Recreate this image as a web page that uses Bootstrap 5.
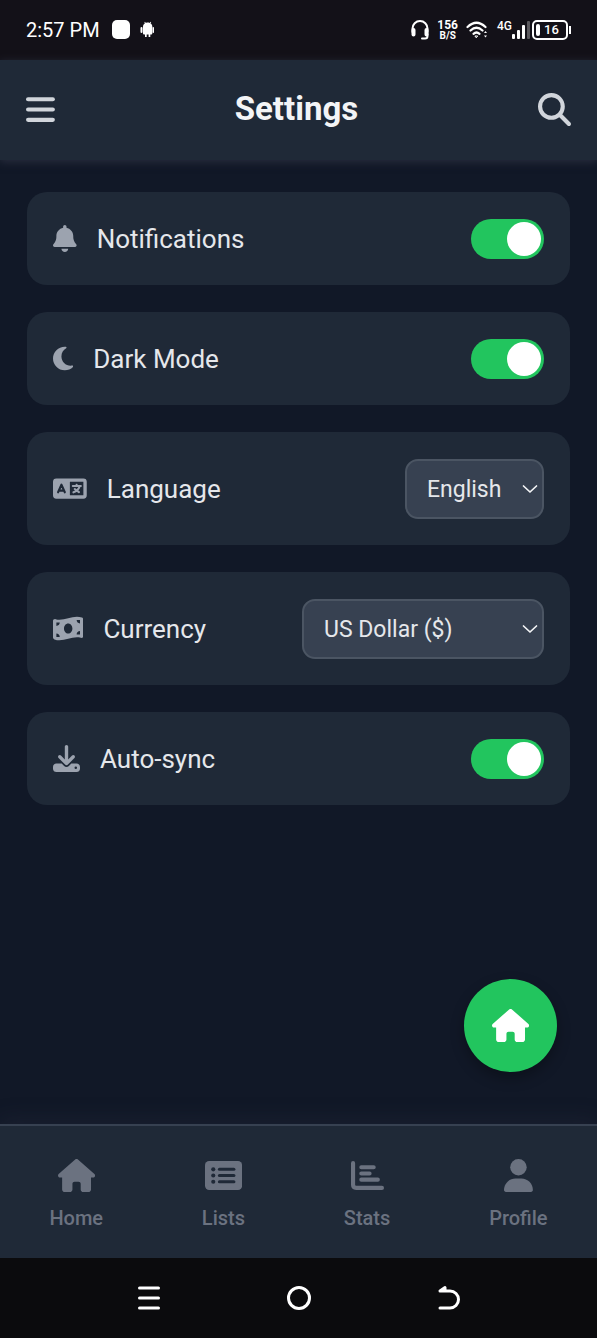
<!DOCTYPE html>
<html lang="en">
<head>
<meta charset="utf-8">
<meta name="viewport" content="width=device-width, initial-scale=1">
<title>Settings</title>
<link href="https://cdn.jsdelivr.net/npm/bootstrap@5.3.0/dist/css/bootstrap.min.css" rel="stylesheet">
<style>
  body { background: #111827; color: #e5e7eb; font-family: Roboto, "Liberation Sans", sans-serif; }
  svg { display: block; fill: currentColor; flex: none; }
  .line-art { fill: none; stroke: currentColor; stroke-linecap: round; stroke-linejoin: round; }

  .status-strip { height: 60px; padding: 0 26px; background: #131118; color: #fff; font-size: 20px; line-height: 24px; }
  .net-rate { font-size: 12px; line-height: 10px; font-weight: 700; text-align: center; }
  .net-rate span { font-size: 10px; }
  .net-kind { font-size: 12px; line-height: 12px; font-weight: 500; }
  .charge { width: 36px; height: 20px; border: 2px solid #fff; border-radius: 5px; padding: 0 2px; font-size: 13px; line-height: 16px; font-weight: 500; }
  .charge-level { width: 4px; height: 12px; border-radius: 2px; background: #fff; }
  .charge-tip { width: 2px; height: 8px; margin-left: 1px; background: #fff; }

  .app-header { height: 100px; padding: 0 26px 2px; background: #1f2937; box-shadow: 0 2px 8px rgba(46, 50, 68, .8); }
  .app-header h1 { font-size: 33px; line-height: 40px; font-weight: 700; color: #f3f4f6; }
  .bare-btn { background: none; border: 0; padding: 0; color: #d1d5db; }
  .glyph-lg { height: 33px; }
  .glyph-md { height: 27px; color: #9ca3af; }

  .settings { padding: 32px 27px; gap: 27px; }
  .setting { min-height: 93px; padding: 26px; border: 0; border-radius: 20px; background: #1f2937; color: #e5e7eb; }
  .setting-tall { min-height: 113px; }
  .setting label { gap: 20px; font-size: 26px; line-height: 40px; }
  .setting .form-check-input {
    width: 73px; height: 40px; margin: 0; border: 0; border-radius: 20px; background-color: #4b5563;
    background-image: url("data:image/svg+xml,%3Csvg xmlns='http://www.w3.org/2000/svg' viewBox='0 0 34 34'%3E%3Ccircle cx='17' cy='17' r='17' fill='%23fff'/%3E%3C/svg%3E");
    background-size: 34px 34px; background-position: left 3px center;
  }
  .setting .form-check-input:checked { background-color: #22c55e; background-position: right 3px center; }
  .setting .form-select {
    height: 60px; padding: 2px 36px 0 20px; border: 2px solid #4b5563; border-radius: 13px;
    background-color: #374151; color: #e5e7eb; font-size: 23px; line-height: 32px;
    background-image: url("data:image/svg+xml,%3Csvg xmlns='http://www.w3.org/2000/svg' viewBox='0 0 16 16' fill='none' stroke='%23f3f4f6' stroke-width='1.7' stroke-linecap='round' stroke-linejoin='round'%3E%3Cpath d='M1.500 5l6.500 6 6.500-6'/%3E%3C/svg%3E");
    background-size: 16px 16px; background-position: right 4px center;
  }
  .pick-language { width: 139px; }
  .pick-currency { width: 242px; }

  .fab { position: absolute; right: 40px; bottom: 52px; width: 93px; height: 93px; border: 0; background: #22c55e; color: #fff; box-shadow: 0 6px 14px rgba(0, 0, 0, .3); }

  .tab-strip { height: 134px; padding-top: 6px; border-top: 2px solid #374151; background: #1f2937; box-shadow: 0 -4px 20px rgba(46, 50, 68, .3); }
  .tab-strip a { gap: 12px; color: #6b7280; font-size: 20px; line-height: 28px; font-weight: 500; text-decoration: none; }

  .system-strip { height: 80px; background: #0b0b0d; }
  .system-strip button { color: #fff; width: 150px; height: 80px; }
</style>
</head>
<body>
<div class="d-flex flex-column min-vh-100">
  <div class="status-strip d-flex align-items-center justify-content-between">
    <div class="d-flex align-items-center">
      <span>2:57 PM</span>
      <svg class="ms-2" width="46" height="20" viewBox="0 0 46 20">
        <rect x="4" y="0" width="18" height="19" rx="5"/>
        <path d="M35 6.500C35.200 4.800 36 4 37 3.300L36.300 2.200 37 1.800 37.900 2.900C39 2.500 40.500 2.500 41.600 2.900L42.500 1.800 43.200 2.200 42.400 3.300C43.400 4 44.200 4.800 44.300 6.500V13.500Q44.300 14.500 43.300 14.500H42.300V17H40.600V14.500H38.700V17H37V14.500H36Q35 14.500 35 13.500z"/>
        <rect x="32.500" y="7" width="2" height="6" rx="1"/><rect x="44.500" y="7" width="1.500" height="6" rx="0.700"/>
      </svg>
    </div>
    <div class="d-flex align-items-center">
      <svg class="line-art me-2" width="18" height="20" viewBox="0 0 18 20" stroke-width="2">
        <path d="M1.500 12V8.500a7.500 7.500 0 0 1 15 0V12M16.500 14v2q0 2.500-2.500 2.500h-3"/>
        <path d="M2.500 10v4.500M15.500 10v4.500" stroke-width="4"/>
      </svg>
      <div class="net-rate me-2">156<br><span>B/S</span></div>
      <svg class="line-art me-2" width="23" height="18" viewBox="0 0 23 18" stroke-width="2.200">
        <path d="M1.500 6Q10.500-2.500 19.500 6M4.500 9.500Q10.500 4 16.500 9.500M7.500 12.800Q10.500 10.200 13.500 12.800"/>
        <path d="M9.300 15h2.400l-1.200 1.500z" stroke-width="1"/>
        <path d="M18 12l1.500-2 1.500 2zM18 14.500l1.500 2 1.500-2z" fill="currentColor" stroke="none"/>
      </svg>
      <span class="net-kind align-self-start">4G</span>
      <svg width="20" height="20" viewBox="0 0 20 20">
        <rect x="0" y="14" width="3" height="5" rx="1"/><rect x="5" y="10" width="3" height="9" rx="1"/>
        <rect x="10" y="5" width="3" height="14" rx="1"/><rect x="15" y="1" width="3" height="18" rx="1" opacity=".3"/>
      </svg>
      <div class="charge d-flex align-items-center gap-1"><span class="charge-level"></span>16</div>
      <span class="charge-tip"></span>
    </div>
  </div>

  <header class="app-header d-flex align-items-center justify-content-between">
    <button class="bare-btn" type="button" aria-label="Menu">
      <svg class="glyph-lg" viewBox="0 0 448 512"><rect y="64" width="448" height="64" rx="32"/><rect y="224" width="448" height="64" rx="32"/><rect y="384" width="448" height="64" rx="32"/></svg>
    </button>
    <h1 class="m-0">Settings</h1>
    <button class="bare-btn" type="button" aria-label="Search">
      <svg class="glyph-lg" viewBox="0 0 512 512"><path d="M416 208c0 45.900-14.900 88.300-40 122.700L502.600 457.400c12.500 12.500 12.500 32.800 0 45.300s-32.800 12.500-45.300 0L330.700 376c-34.400 25.200-76.800 40-122.700 40C93.100 416 0 322.900 0 208S93.100 0 208 0S416 93.100 416 208zM208 352a144 144 0 1 0 0-288 144 144 0 1 0 0 288z"/></svg>
    </button>
  </header>

  <main class="flex-grow-1 position-relative">
    <div class="settings d-flex flex-column">
      <div class="card setting flex-row align-items-center justify-content-between">
        <label class="d-flex align-items-center" for="notifications">
          <svg class="glyph-md" viewBox="0 0 448 512"><path d="M224 0c-17.700 0-32 14.300-32 32V51.200C119 66 64 130.600 64 208v18.800c0 47-17.300 92.400-48.500 127.600l-7.400 8.300c-8.400 9.400-10.400 22.900-5.300 34.400S19.400 416 32 416H416c12.600 0 24-7.400 29.200-18.900s3.100-25-5.300-34.400l-7.400-8.300C401.300 319.200 384 273.900 384 226.800V208c0-77.400-55-142-128-156.800V32c0-17.700-14.300-32-32-32zm45.300 493.300c12-12 18.700-28.300 18.700-45.300H224 160c0 17 6.700 33.300 18.700 45.300s28.300 18.700 45.300 18.700s33.300-6.700 45.300-18.700z"/></svg>
          Notifications
        </label>
        <input class="form-check-input" type="checkbox" role="switch" id="notifications" checked>
      </div>
      <div class="card setting flex-row align-items-center justify-content-between">
        <label class="d-flex align-items-center" for="dark-mode">
          <svg class="glyph-md" viewBox="0 0 384 512"><path d="M223.500 32C100 32 0 132.300 0 256S100 480 223.500 480c60.600 0 115.500-24.200 155.800-63.400c5-4.900 6.300-12.500 3.100-18.700s-10.100-9.700-17-8.500c-9.800 1.700-19.800 2.600-30.100 2.600c-96.900 0-175.500-78.800-175.500-176c0-65.800 36-123.100 89.300-153.300c6.100-3.500 9.200-10.500 7.700-17.300s-7.300-11.900-14.300-12.500c-6.300-.5-12.600-.8-19-.8z"/></svg>
          Dark Mode
        </label>
        <input class="form-check-input" type="checkbox" role="switch" id="dark-mode" checked>
      </div>
      <div class="card setting setting-tall flex-row align-items-center justify-content-between">
        <label class="d-flex align-items-center" for="language">
          <svg class="glyph-md" viewBox="0 0 640 512">
            <path fill-rule="evenodd" d="M64 64H576a64 64 0 0 1 64 64V384a64 64 0 0 1-64 64H64a64 64 0 0 1-64-64V128a64 64 0 0 1 64-64zM320 128V384H576V128z"/>
            <path d="M96 328L160 184L224 328M120 296H200" fill="none" stroke="#1f2937" stroke-width="40" stroke-linecap="round" stroke-linejoin="round"/>
            <path class="line-art" d="M448 184V208M376 208H528M508 208C488 268 448 308 388 328M412 266L492 326" stroke-width="40"/>
          </svg>
          Language
        </label>
        <select class="form-select pick-language" id="language"><option>English</option><option>Spanish</option><option>French</option></select>
      </div>
      <div class="card setting setting-tall flex-row align-items-center justify-content-between">
        <label class="d-flex align-items-center" for="currency">
          <svg class="glyph-md" viewBox="0 0 576 512"><path d="M0 112.500V422.300c0 18 10.100 35 27 41.300c87 32.500 174 10.300 261-11.900c79.800-20.300 159.600-40.700 239.300-18.900c23 6.300 48.700-9.500 48.700-33.400V89.700c0-18-10.100-35-27-41.300C462 15.900 375 38.100 288 60.300C208.200 80.600 128.400 100.900 48.700 79.100C25.600 72.800 0 88.600 0 112.500zM288 352c-44.200 0-80-43-80-96s35.800-96 80-96s80 43 80 96s-35.800 96-80 96zM64 352c35.300 0 64 28.700 64 64H64V352zm64-208c0 35.300-28.700 64-64 64V144h64zM512 304v64H448c0-35.300 28.700-64 64-64zM448 96h64v64c-35.300 0-64-28.700-64-64z" fill-rule="evenodd"/></svg>
          Currency
        </label>
        <select class="form-select pick-currency" id="currency"><option>US Dollar ($)</option><option>Euro (€)</option><option>British Pound (£)</option></select>
      </div>
      <div class="card setting flex-row align-items-center justify-content-between">
        <label class="d-flex align-items-center" for="auto-sync">
          <svg class="glyph-md" viewBox="0 0 512 512"><path fill-rule="evenodd" d="M288 32c0-17.700-14.300-32-32-32s-32 14.300-32 32V274.700l-73.400-73.400c-12.500-12.500-32.800-12.500-45.300 0s-12.500 32.800 0 45.300l128 128c12.500 12.500 32.800 12.500 45.300 0l128-128c12.500-12.500 12.500-32.800 0-45.300s-32.800-12.500-45.300 0L288 274.700V32zM64 352c-35.300 0-64 28.700-64 64v32c0 35.300 28.700 64 64 64H448c35.300 0 64-28.700 64-64V416c0-35.300-28.700-64-64-64H346.500l-45.300 45.300c-25 25-65.500 25-90.500 0L165.500 352H64zm368 56a24 24 0 1 1 0 48 24 24 0 1 1 0-48z"/></svg>
          Auto-sync
        </label>
        <input class="form-check-input" type="checkbox" role="switch" id="auto-sync" checked>
      </div>
    </div>
    <button class="fab rounded-circle d-flex align-items-center justify-content-center" type="button" aria-label="Home">
      <svg class="glyph-lg" viewBox="0 0 576 512"><path id="house" d="M575.800 255.500c0 18-15 32.100-32 32.100h-32l.7 160.200c0 2.700-.2 5.400-.5 8.100V472c0 22.100-17.900 40-40 40H456c-1.100 0-2.200 0-3.300-.1c-1.400 .1-2.800 .1-4.200 .1H416 392c-22.100 0-40-17.900-40-40V448 384c0-17.700-14.300-32-32-32H256c-17.700 0-32 14.300-32 32v64 24c0 22.100-17.900 40-40 40H160 128.100c-1.500 0-3-.1-4.500-.2c-1.200 .1-2.400 .2-3.600 .2H104c-22.100 0-40-17.900-40-40V360c0-.9 0-1.900 .1-2.800V287.600H32c-18 0-32-14-32-32.100c0-9 3-17 10-24L266.400 8c7-7 15-8 22-8s15 2 21 7L564.800 231.500c8 7 12 15 11 24z"/></svg>
    </button>
  </main>

  <nav class="tab-strip d-flex align-items-center justify-content-around" aria-label="Main">
    <a class="d-flex flex-column align-items-center" href="#home">
      <svg class="glyph-lg" viewBox="0 0 576 512"><use href="#house"/></svg>Home
    </a>
    <a class="d-flex flex-column align-items-center" href="#lists">
      <svg class="glyph-lg" viewBox="0 0 576 512"><rect y="32" width="576" height="448" rx="64"/><g fill="#1f2937"><circle cx="128" cy="160" r="32"/><circle cx="128" cy="256" r="32"/><circle cx="128" cy="352" r="32"/><rect x="200" y="136" width="272" height="48" rx="24"/><rect x="200" y="232" width="272" height="48" rx="24"/><rect x="200" y="328" width="272" height="48" rx="24"/></g></svg>Lists
    </a>
    <a class="d-flex flex-column align-items-center" href="#stats">
      <svg class="glyph-lg line-art" viewBox="0 0 512 512" stroke-width="64"><path d="M32 64V400Q32 448 80 448H480M160 128H352M160 224H288M160 320H416"/></svg>Stats
    </a>
    <a class="d-flex flex-column align-items-center" href="#profile">
      <svg class="glyph-lg" viewBox="0 0 448 512"><circle cx="224" cy="128" r="128"/><path d="M178.300 304C79.800 304 0 383.800 0 482.300C0 498.700 13.300 512 29.700 512H418.300c16.400 0 29.700-13.300 29.700-29.700C448 383.800 368.200 304 269.700 304H178.300z"/></svg>Profile
    </a>
  </nav>

  <div class="system-strip d-flex justify-content-center">
    <button class="bare-btn d-flex align-items-center justify-content-center" type="button" aria-label="Recent apps">
      <svg class="line-art" width="24" height="26" viewBox="0 0 24 26" stroke-width="3"><path d="M2.500 3h19M2.500 13h19M2.500 23h19"/></svg>
    </button>
    <button class="bare-btn d-flex align-items-center justify-content-center" type="button" aria-label="Home screen">
      <svg class="line-art" width="24" height="26" viewBox="0 0 24 26" stroke-width="3"><circle cx="12" cy="13" r="10.500"/></svg>
    </button>
    <button class="bare-btn d-flex align-items-center justify-content-center" type="button" aria-label="Back">
      <svg class="line-art" width="24" height="26" viewBox="0 0 24 26" stroke-width="3"><path d="M3 6H13a8.500 8.500 0 0 1 0 17H3M3 6L8 2.500V6"/></svg>
    </button>
  </div>
</div>
<script src="https://cdn.jsdelivr.net/npm/bootstrap@5.3.0/dist/js/bootstrap.bundle.min.js"></script>
</body>
</html>
